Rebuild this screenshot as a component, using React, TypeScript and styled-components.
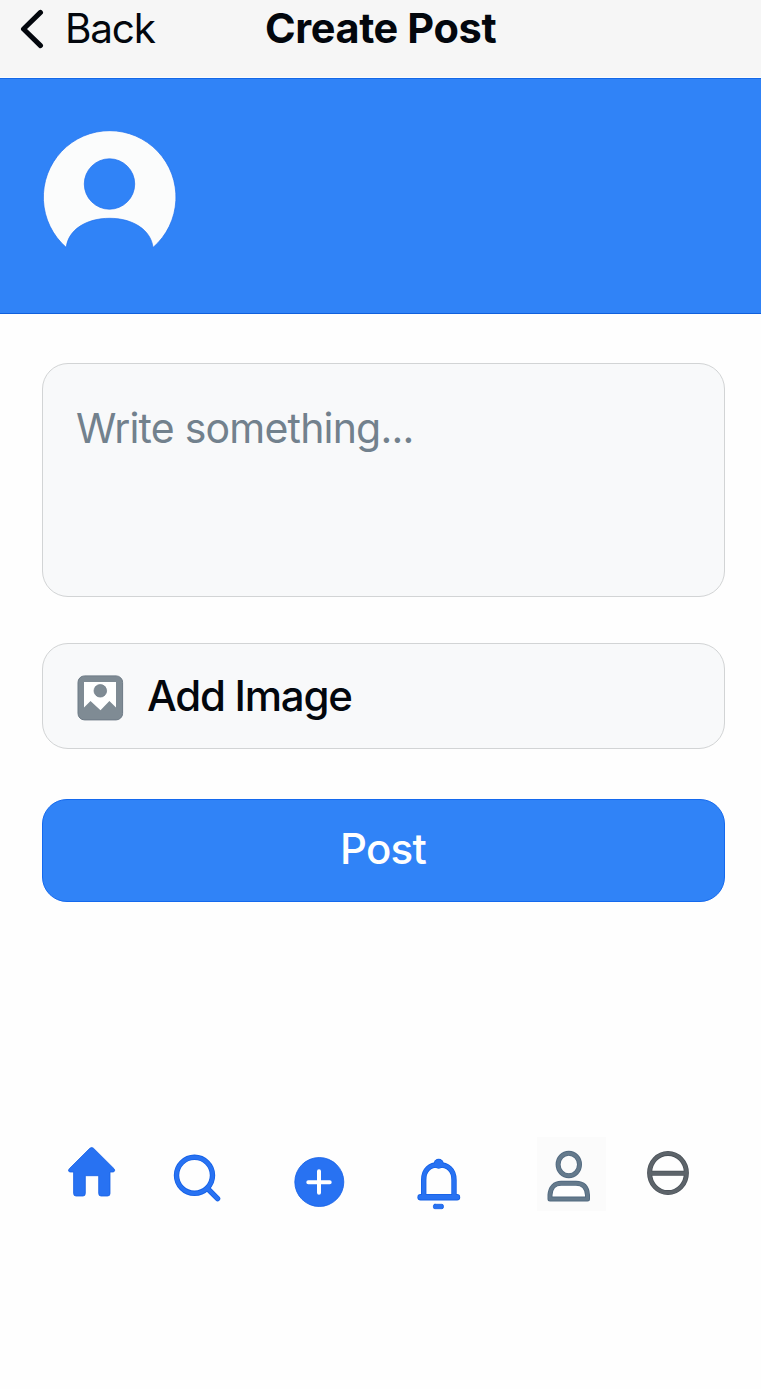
import React from "react";
import styled, { createGlobalStyle } from "styled-components";

const GlobalStyle = createGlobalStyle`
  * { box-sizing: border-box; }
  html, body { margin: 0; padding: 0; background: #fefefe; }
  body { font-family: Inter, "Liberation Sans", sans-serif; color: #03070d; }
  button { font: inherit; color: inherit; }
`;

const Screen = styled.div`
  width: 761px;
  min-height: 1389px;
  background: #fefefe;
`;

const Header = styled.header`
  display: grid;
  grid-template-columns: 265px 231px 1fr;
  height: 78px;
  background: #f6f6f6;
  border-bottom: 1px solid #fafcff;
`;

const BackButton = styled.button`
  display: flex;
  align-items: flex-start;
  gap: 21px;
  height: 58px;
  padding: 0 0 0 19px;
  border: 0;
  background: none;
`;

const Label = styled.span<{ $size: number; $weight?: number; $spacing?: number }>`
  font-size: ${(p) => p.$size}px;
  font-weight: ${(p) => p.$weight ?? 400};
  letter-spacing: ${(p) => p.$spacing ?? 0}px;
  line-height: 58px;
  white-space: nowrap;
`;

const Title = styled.h1`
  margin: 0;
  font-size: 41.5px;
  font-weight: 700;
  letter-spacing: -0.4px;
  line-height: 57px;
  white-space: nowrap;
`;

const Banner = styled.section`
  height: 236px;
  padding: 52px 0 0 43px;
  background: #3083f7;
  border-top: 1px solid #1468e8;
  border-bottom: 1px solid #1060dc;
`;

const Form = styled.main`
  display: flex;
  flex-direction: column;
  padding: 49px 36px 0 42px;
`;

const Panel = styled.div`
  background: #f8f9fa;
  border: 1.5px solid #d2d4d5;
  border-radius: 26px;
`;

const TextPanel = styled(Panel)`
  height: 234px;
  padding: 35px 33px;
  color: #72818d;
`;

const ImagePanel = styled(Panel)`
  display: flex;
  align-items: flex-start;
  gap: 23px;
  height: 106px;
  margin-top: 46px;
  padding: 23px 34px;

  svg { margin-top: 8px; }
`;

const PostButton = styled.button`
  display: flex;
  justify-content: center;
  height: 103px;
  margin-top: 50px;
  padding: 20px 1px 0 0;
  border: 1px solid #1469ee;
  border-radius: 25px;
  background: #3083f7;
  color: #fff;
`;

const Nav = styled.nav`
  display: flex;
  align-items: flex-start;
  padding: 235px 0 0 66px;
`;

const NavItem = styled.a<{ $gap?: number; $drop?: number; $tint?: string }>`
  display: flex;
  margin-left: ${(p) => p.$gap ?? 0}px;
  margin-top: ${(p) => p.$drop ?? 0}px;
  background: ${(p) => p.$tint ?? "none"};
`;

const BLUE = "#2872f2";
const BLUE_EDGE = "#1460e6";

const ChevronIcon = () => (
  <svg width="25" height="58" viewBox="0 0 25 58" fill="none">
    <path d="M21.500 12.400L4.500 29L21.500 45.600" stroke="#03070d" strokeWidth="5" strokeLinecap="round" strokeLinejoin="round" />
  </svg>
);

const AvatarIcon = () => (
  <svg width="134" height="118" viewBox="0 0 134 118">
    <path
      fillRule="evenodd"
      d="M23.300 116.500A66.300 66.500 0 1 1 110 116.500C108 99 90 87.300 66.600 87.300C43 87.300 25 99 23.300 116.500ZM66.500 27.800A25.200 25.200 0 1 0 66.500 78.200A25.200 25.200 0 1 0 66.500 27.800Z"
      fill="#fbfcfc"
      stroke="#1c6fee"
      strokeWidth="0.7"
    />
  </svg>
);

const ImageIcon = () => (
  <svg width="47" height="46" viewBox="0 0 47 46">
    <rect x="1" y="0.9" width="44.6" height="44" rx="6.5" fill="#7f8b94" stroke="#6d7a85" />
    <path d="M7 7H39V32.5L32.4 26L23.5 35.3L13.5 26L7 32.5Z" fill="#fff" />
    <circle cx="23.3" cy="15.8" r="6.3" fill="#7f8b94" stroke="#6d7a85" strokeWidth="0.7" />
  </svg>
);

const HomeIcon = () => (
  <svg width="52" height="54" viewBox="66 1145 52 54">
    <path
      d="M89.8 1148.3Q91.7 1146.7 93.5 1148.3L114 1168.7Q115.8 1171.6 112.8 1172H110V1193.5Q110 1196 107.500 1196H101Q98.700 1196 98.700 1193.500V1175.700H85.300V1193.500Q85.300 1196 83 1196H76Q73.600 1196 73.600 1193.500V1172H70.300Q67.300 1171.600 69.300 1168.700Z"
      fill={BLUE} stroke={BLUE_EDGE} strokeWidth="0.8"
    />
  </svg>
);

const SearchIcon = () => (
  <svg width="50" height="50" viewBox="172 1153 50 50" fill="none" strokeLinecap="round">
    <g stroke={BLUE_EDGE} strokeWidth="5.4">
      <circle cx="194.500" cy="1175.300" r="18" />
      <path d="M208 1189L217.600 1198.600" />
    </g>
    <g stroke={BLUE} strokeWidth="3.8">
      <circle cx="194.500" cy="1175.300" r="18" />
      <path d="M208 1189L217.600 1198.600" />
    </g>
  </svg>
);

const AddIcon = () => (
  <svg width="52" height="52" viewBox="0 0 52 52">
    <circle cx="26.300" cy="26" r="24.5" fill={BLUE} stroke={BLUE_EDGE} strokeWidth="0.8" />
    <path d="M26 15.300V36.700M15.300 26.300H36.700" stroke="#fff" strokeWidth="4" strokeLinecap="round" />
  </svg>
);

const bellDome = "M423.700 1195.500V1180C423.700 1169.500 430 1164.800 438.700 1164.800C447.500 1164.800 454 1169.500 454 1180V1195.500";

const BellIcon = () => (
  <svg width="46" height="52" viewBox="416 1158 46 52" fill="none" strokeLinecap="round">
    <path d={bellDome} stroke={BLUE_EDGE} strokeWidth="5.400" />
    <path d="M420.600 1197.200H457" stroke={BLUE_EDGE} strokeWidth="6.400" />
    <circle cx="438.700" cy="1163.800" r="5" fill={BLUE_EDGE} />
    <path d={bellDome} stroke={BLUE} strokeWidth="3.800" />
    <path d="M420.600 1197.200H457" stroke={BLUE} strokeWidth="4.800" />
    <circle cx="438.700" cy="1163.800" r="4.200" fill={BLUE} />
    <rect x="433.400" y="1204.300" width="10" height="4.400" rx="1.500" fill={BLUE} stroke={BLUE_EDGE} strokeWidth="0.8" />
  </svg>
);

const profileBody = "M550 1199V1195C550.500 1187 555 1183.300 561 1183.300H576C583 1183.300 587 1187.500 587.500 1195V1199Z";

const ProfileIcon = () => (
  <svg width="69" height="74" viewBox="537 1137 69 74" fill="none" strokeLinejoin="round">
    <path d={profileBody} fill="#fff" />
    <g stroke="#526a80" strokeWidth="5">
      <ellipse cx="568.800" cy="1164.500" rx="10.700" ry="11.200" />
      <path d={profileBody} />
    </g>
    <g stroke="#657a8c" strokeWidth="3.200">
      <ellipse cx="568.800" cy="1164.500" rx="10.700" ry="11.200" />
      <path d={profileBody} />
    </g>
  </svg>
);

const RestrictIcon = () => (
  <svg width="44" height="46" viewBox="0 0 44 46" fill="none">
    <g stroke="#4b5259" strokeWidth="5">
      <ellipse cx="22" cy="23" rx="18.400" ry="19.600" />
      <path d="M5 23.300H39" />
    </g>
    <g stroke="#5d646a" strokeWidth="3.400">
      <ellipse cx="22" cy="23" rx="18.400" ry="19.600" />
      <path d="M5 23.300H39" />
    </g>
  </svg>
);

export default function App() {
  return (
    <Screen>
      <GlobalStyle />
      <Header>
        <BackButton>
          <ChevronIcon />
          <Label $size={40.5} $spacing={-1.2}>Back</Label>
        </BackButton>
        <Title>Create Post</Title>
      </Header>
      <Banner>
        <AvatarIcon />
      </Banner>
      <Form>
        <TextPanel>
          <Label $size={41} $spacing={-0.8}>Write something...</Label>
        </TextPanel>
        <ImagePanel>
          <ImageIcon />
          <Label $size={42} $weight={500} $spacing={-1.25}>Add Image</Label>
        </ImagePanel>
        <PostButton>
          <Label $size={42} $weight={500} $spacing={-0.8}>Post</Label>
        </PostButton>
      </Form>
      <Nav>
        <NavItem $drop={8}><HomeIcon /></NavItem>
        <NavItem $gap={54} $drop={16}><SearchIcon /></NavItem>
        <NavItem $gap={71} $drop={19}><AddIcon /></NavItem>
        <NavItem $gap={71} $drop={21}><BellIcon /></NavItem>
        <NavItem $gap={75} $tint="#fbfbfb"><ProfileIcon /></NavItem>
        <NavItem $gap={40} $drop={13}><RestrictIcon /></NavItem>
      </Nav>
    </Screen>
  );
}
